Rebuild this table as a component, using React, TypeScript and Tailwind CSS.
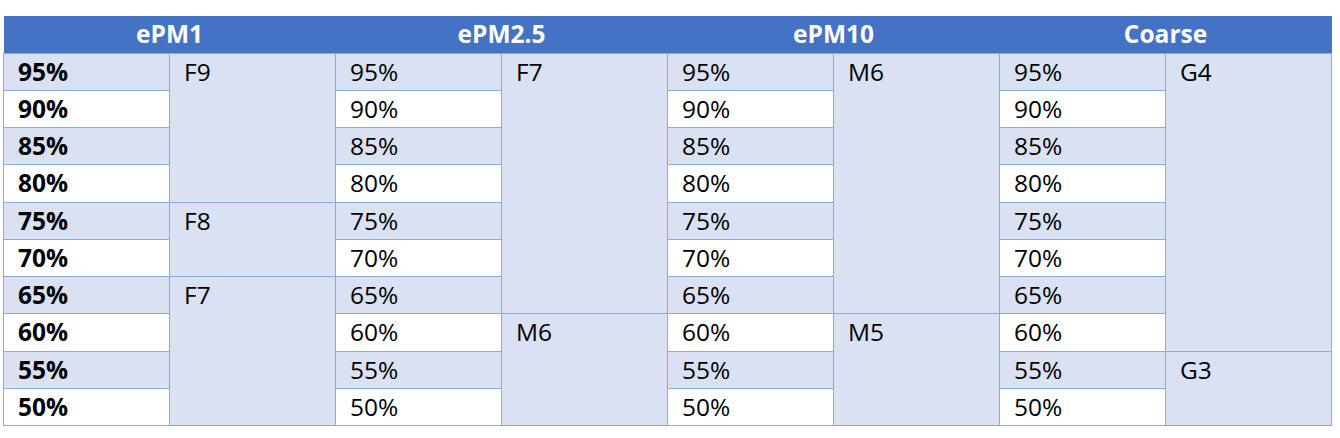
import React from 'react';

type Cell = { text: string; span: number };

const groups = ['ePM1', 'ePM2.5', 'ePM10', 'Coarse'];
const percents = ['95%', '90%', '85%', '80%', '75%', '70%', '65%', '60%', '55%', '50%'];

// merged class cells per group, keyed by starting row
const classes: Cell[][] = [
  [{ text: 'F9', span: 4 }, { text: 'F8', span: 2 }, { text: 'F7', span: 4 }],
  [{ text: 'F7', span: 7 }, { text: 'M6', span: 3 }],
  [{ text: 'M6', span: 7 }, { text: 'M5', span: 3 }],
  [{ text: 'G4', span: 8 }, { text: 'G3', span: 2 }],
];

const startsAt = (cells: Cell[], row: number) => {
  let r = 0;
  for (const c of cells) {
    if (r === row) return c;
    r += c.span;
  }
  return null;
};

const cellBase =
  'border border-[#8ea9db] pl-[14px] pr-2 py-0 align-top text-left leading-[36px] text-black';

const App: React.FC = () => {
  return (
    <div
      className="bg-white w-[1340px] h-[438px] pt-4 pl-[3px]"
      style={{ fontFamily: '"Open Sans", "Noto Sans", sans-serif' }}
    >
      <table className="table-fixed border-collapse w-[1329px] text-[24.5px]">
        <colgroup>
          {Array.from({ length: 8 }).map((_, i) => (
            <col key={i} className="w-[166px]" />
          ))}
        </colgroup>
        <thead>
          <tr className="h-[37px]">
            {groups.map((g) => (
              <th
                key={g}
                colSpan={2}
                className="bg-[#4472c4] text-white font-bold text-center p-0 leading-[36px]"
              >
                {g}
              </th>
            ))}
          </tr>
        </thead>
        <tbody>
          {percents.map((p, row) => {
            const fill = row % 2 === 0 ? 'bg-[#d9e1f2]' : 'bg-white';
            return (
              <tr key={p} className="h-[37.25px]">
                {groups.map((g, gi) => {
                  const merged = startsAt(classes[gi], row);
                  return (
                    <React.Fragment key={g}>
                      <td className={`${cellBase} ${fill} ${gi === 0 ? 'font-bold' : ''}`}>{p}</td>
                      {merged && (
                        <td rowSpan={merged.span} className={`${cellBase} bg-[#d9e1f2]`}>
                          {merged.text}
                        </td>
                      )}
                    </React.Fragment>
                  );
                })}
              </tr>
            );
          })}
        </tbody>
      </table>
    </div>
  );
};

export default App;
